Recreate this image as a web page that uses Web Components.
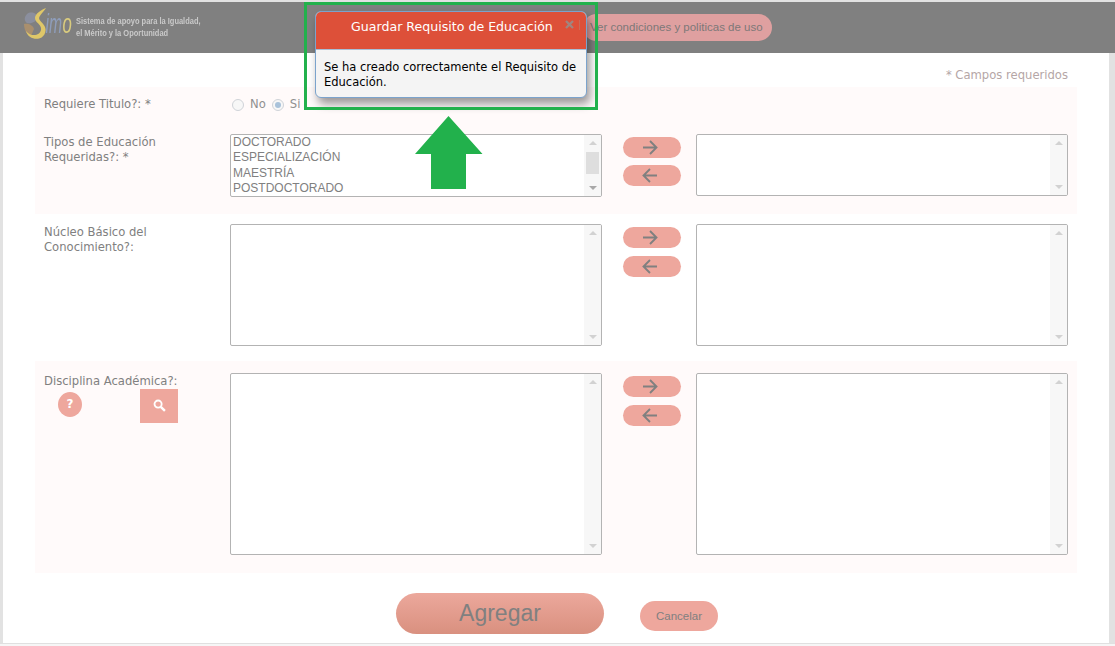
<!DOCTYPE html>
<html lang="es">
<head>
<meta charset="utf-8">
<title>SIMO</title>
<style>
  html,body{margin:0;padding:0;width:1115px;height:646px;overflow:hidden;background:#fff}
</style>
</head>
<body>
<simo-app>
  <simo-header slot="header"></simo-header>
  <campos-note>* Campos requeridos</campos-note>
  <form-section tint style="--pad-top:0px;--pad-bottom:17px">
    <radio-row label="Requiere Titulo?: *"></radio-row>
    <dual-list label="Tipos de Educación Requeridas?: *" height="63" right-height="62" items="DOCTORADO|ESPECIALIZACIÓN|MAESTRÍA|POSTDOCTORADO" thumb gap="7"></dual-list>
  </form-section>
  <form-section style="--pad-top:10px;--pad-bottom:15px">
    <dual-list label="Núcleo Básico del Conocimiento?:" height="122" right-height="122" gap="8"></dual-list>
  </form-section>
  <form-section tint style="--pad-top:12px;--pad-bottom:18px">
    <dual-list label="Disciplina Académica?:" height="182" right-height="182" gap="8" tools></dual-list>
  </form-section>
  <form-actions></form-actions>
  <simo-modal slot="over" heading="Guardar Requisito de Educación">Se ha creado correctamente el Requisito de Educación.</simo-modal>
  <green-callout slot="over"></green-callout>
</simo-app>

<script>
const mk = (tag, css, html, init) => {
  customElements.define(tag, class extends HTMLElement {
    connectedCallback() {
      if (this.shadowRoot) return;
      const s = this.attachShadow({mode:'open'});
      s.innerHTML = `<style>${css}</style>` + (typeof html === 'function' ? html(this) : html);
      if (init) init(this, s);
    }
  });
};
const VERD = `"DejaVu Sans",Verdana,sans-serif`;
const ARIAL = `"Liberation Sans",Arial,sans-serif`;

mk('simo-app', `
  :host{display:flex;flex-direction:column;position:relative;width:1115px;height:646px;background:#e2e2e2;box-sizing:border-box;padding-top:2px;overflow:hidden;font:11.6px/14.6px ${VERD};color:#808080}
  main{flex:1;display:flex;flex-direction:column;background:#fff;margin:0 6px 0 3px;padding:0 32px}
  .foot{height:3px;background:#f6f6f6;border-top:1px solid #e0e0e0;box-sizing:border-box}
`, `<slot name="header"></slot><main><slot></slot></main><div class="foot"></div><slot name="over"></slot>`);

mk('simo-header', `
  :host{display:flex;align-items:center;height:51px;background:#808080;flex:none;box-sizing:border-box;padding-left:24px;position:relative}
  svg{display:block;flex:none;align-self:flex-start;margin-top:5px;filter:blur(.35px)}
  .tag{margin-left:4px;font:bold 9px/12px ${ARIAL};color:#c9c9c9;transform:scaleX(.83);transform-origin:0 50%;white-space:nowrap;position:relative;top:-1px}
  .pill{position:absolute;left:583px;top:12px;width:189px;height:27px;box-sizing:border-box;border-radius:14px;background:#dfa0a0;color:#7d7878;font:11.5px/27px ${ARIAL};padding-left:7px;white-space:nowrap}
`, `
  <svg width="48" height="38" viewBox="0 0 48 38">
    <path d="M3 7C7 4 13 6 13 10C13 15 7 17 3 16C0 14 0 10 3 7Z" fill="#8b8f9e"/>
    <path d="M0 17C4 16 9 18 10 22L7 29C3 28 0 23 0 17Z" fill="#a98f6e"/>
    <path d="M22 1C17 3 11 7 11 11C11 16 18 17 17 23C16 28 8 31 2 24C4 33 18 35 21 26C24 18 15 15 15 11C16 8 20 4 22 1Z" fill="#dfc769"/>
    <text transform="translate(21.500 26) scale(.58 1)" font-family="'Liberation Sans',sans-serif" font-style="italic" font-size="27" fill="#8e9dba">im</text>
    <text transform="translate(38.500 26) scale(.62 1)" font-family="'Liberation Sans',sans-serif" font-style="italic" font-size="27" fill="#d9cb7e">o</text>
  </svg>
  <div class="tag">Sistema de apoyo para la Igualdad,<br>el Mérito y la Oportunidad</div>
  <div class="pill">Ver condiciones y politicas de uso</div>
`);

mk('campos-note', `
  :host{display:block;height:34px;box-sizing:border-box;padding:15px 9px 0 0;text-align:right;color:#b5a6a6}
`, `<slot></slot>`);

mk('form-section', `
  :host{display:block;padding:var(--pad-top) 0 var(--pad-bottom) 9px}
  :host([tint]){background:#fffafa}
`, `<slot></slot>`);

mk('radio-row', `
  :host{display:flex;height:47px;box-sizing:border-box;padding-top:10px}
  .l{width:186px;flex:none}
  .opt{display:flex;align-items:center;height:15px;margin-right:4px;color:#909090}
  i{display:block;width:10px;height:10px;border:1px solid #cfd3d8;border-radius:50%;background:#f7f7f7;margin:1px 6px 0 2px;position:relative}
  i.on::after{content:"";position:absolute;inset:2px;border-radius:50%;background:#a9c2da}
`, h => `<div class="l">${h.getAttribute('label')}</div>
  <div class="opt"><i></i>No</div><div class="opt"><i class="on"></i>Si</div>`);

mk('list-box', `
  :host{display:block;box-sizing:border-box;width:372px;height:var(--h);border:1px solid #b3b3b3;border-radius:2px;background:#fff;position:relative;overflow:hidden}
  .items{padding:0 2px;font:12px/15.3px ${ARIAL};color:#808080;white-space:nowrap}
  .bar{position:absolute;top:0;right:0;bottom:0;width:17px;background:#f7f7f7}
  .up,.dn{position:absolute;left:5px;width:0;height:0;border-left:4px solid transparent;border-right:4px solid transparent}
  .up{top:6px;border-bottom:4px solid #d2d2d2}
  .dn{bottom:6px;border-top:4px solid #d2d2d2}
  .thumb{position:absolute;left:2px;right:2px;top:17px;height:22px;background:#dedede}
  :host([active]) .dn{border-top-color:#a8a8a8}
`, h => {
  const it = (h.getAttribute('items')||'').split('|').filter(Boolean).map(t=>`<div>${t}</div>`).join('');
  return `<div class="items">${it}</div><div class="bar"><div class="up"></div>${h.hasAttribute('thumb')?'<div class="thumb"></div>':''}<div class="dn"></div></div>`;
});

mk('move-button', `
  :host{display:flex;align-items:center;justify-content:center;width:58px;height:21px;border-radius:11px;background:#eea79d}
  svg{display:block;margin-right:4px}
`, h => `<svg width="16" height="15" viewBox="0 0 16 15" fill="none" stroke="#808080" stroke-width="1.9">${h.getAttribute('dir')==='right'
  ? '<path d="M1 7.500H14.500M8 1l6.500 6.500L8 14"/>' : '<path d="M15 7.500H1.500M8 1L1.500 7.500 8 14"/>'}</svg>`);

mk('dual-list', `
  :host{display:flex;align-items:flex-start}
  .l{width:186px;flex:none;box-sizing:border-box;padding:1px 30px 0 0}
  .mv{display:flex;flex-direction:column;width:58px;margin:3px 15px 0 21px;flex:none}
  .tools{display:flex;margin-top:0;padding-left:14px;align-items:flex-start}
  .help{width:24px;height:25px;border-radius:50%;background:#eea79d;color:#fff;font:bold 12px/25px ${VERD};text-align:center;margin-top:3px}
  .find{width:38px;height:34px;background:#eea79d;margin-left:58px;display:flex;align-items:center;justify-content:center}
`, h => {
  const H = h.getAttribute('height'), R = h.getAttribute('right-height');
  const tools = h.hasAttribute('tools') ? `<div class="tools"><div class="help">?</div><div class="find">
    <svg width="13" height="13" viewBox="0 0 12 12" fill="none" stroke="#fff"><circle cx="4.700" cy="4.700" r="3.300" stroke-width="1.700"/><path d="M7.200 7.200L11 11" stroke-width="2.200"/></svg></div></div>` : '';
  return `<div class="l">${h.getAttribute('label')}${tools}</div>
    <list-box style="--h:${H}px" items="${h.getAttribute('items')||''}" ${h.hasAttribute('thumb')?'thumb active':''}></list-box>
    <div class="mv" style="gap:${h.getAttribute('gap')}px"><move-button dir="right"></move-button><move-button dir="left"></move-button></div>
    <list-box style="--h:${R}px"></list-box>`;
});

mk('form-actions', `
  :host{display:flex;align-items:flex-start;padding:20px 0 0 361px}
  .add{width:208px;height:41px;border-radius:21px;background:linear-gradient(#eca89c,#d9907f);color:#808080;font:23px/41px ${ARIAL};text-align:center}
  .cancel{width:78px;height:30px;margin:8px 0 0 36px;border-radius:15px;background:#eea79d;color:#808080;font:11.5px/30px ${ARIAL};text-align:center}
`, `<div class="add">Agregar</div><div class="cancel">Cancelar</div>`);

mk('simo-modal', `
  :host{position:absolute;left:315px;top:11px;width:272px;box-sizing:border-box;border:1px solid #7ba3cc;border-radius:6px;background:#f4f4f4;box-shadow:3px 6px 10px rgba(0,0,0,.4);overflow:hidden;font:11.5px/14.8px ${VERD};color:#000}
  .t{position:relative;height:38px;background:#dd5039;border-bottom:1px solid #a9bfd6;box-sizing:border-box;color:#fff;font:12.6px/30px ${VERD};padding-left:35px;white-space:nowrap}
  .x{position:absolute;left:248px;top:7px;width:11px;height:11px}
  .sep{position:absolute;left:263px;top:8px;width:1px;height:10px;background:#c96a58}
  .b{height:47px;box-sizing:border-box;padding:10px 4px 0 8px}
`, h => `<div class="t">${h.getAttribute('heading')}
    <svg class="x" viewBox="0 0 11 11"><path d="M2 2l7 7M9 2l-7 7" stroke="#a0857f" stroke-width="2.400"/></svg><div class="sep"></div></div>
  <div class="b"><slot></slot></div>`);

mk('green-callout', `
  :host{position:absolute;left:0;top:0;width:0;height:0}
  .box{position:absolute;left:304px;top:2px;width:294px;height:108px;box-sizing:border-box;border:3px solid #22b14c}
  svg{position:absolute;left:415px;top:116px}
`, `<div class="box"></div><svg width="68" height="73" viewBox="0 0 68 73"><path d="M33.500 0L67.500 38H51V73H16V38H0Z" fill="#22b14c"/></svg>`);
</script>
</body>
</html>
